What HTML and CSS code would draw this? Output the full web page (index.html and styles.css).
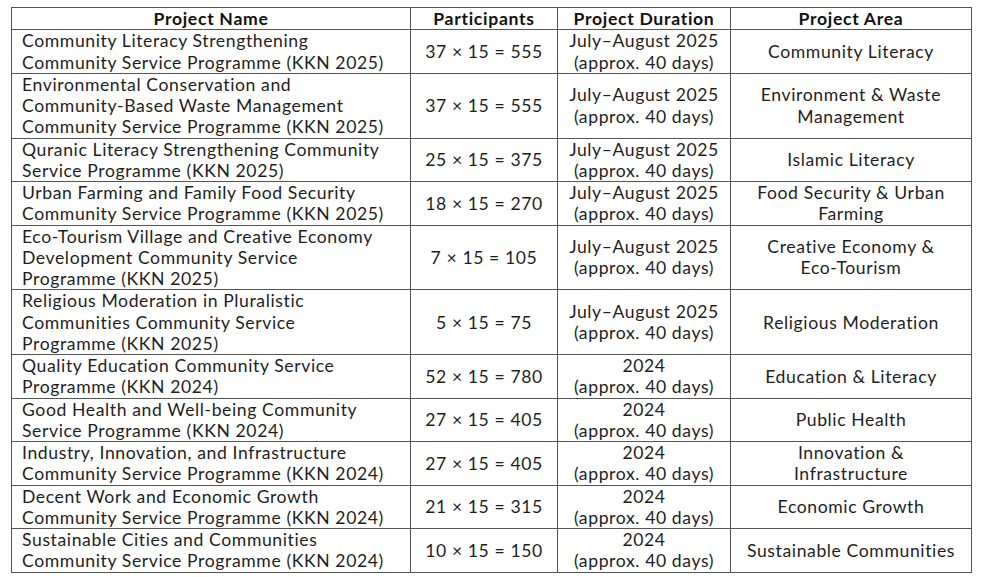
FILE: index.html
```html
<!DOCTYPE html>
<html lang="en">
<head>
<meta charset="utf-8">
<title>KKN Projects</title>
<link rel="stylesheet" href="styles.css">
</head>
<body>
<table class="projects">
  <colgroup>
    <col class="c-name">
    <col class="c-part">
    <col class="c-dur">
    <col class="c-area">
  </colgroup>
  <thead>
    <tr>
      <th>Project Name</th>
      <th>Participants</th>
      <th>Project Duration</th>
      <th>Project Area</th>
    </tr>
  </thead>
  <tbody>
    <tr>
      <td class="name">Community Literacy Strengthening<br>Community Service Programme (KKN 2025)</td>
      <td>37 × 15 = 555</td>
      <td>July–August 2025<br>(approx. 40 days)</td>
      <td>Community Literacy</td>
    </tr>
    <tr>
      <td class="name">Environmental Conservation and<br>Community-Based Waste Management<br>Community Service Programme (KKN 2025)</td>
      <td>37 × 15 = 555</td>
      <td>July–August 2025<br>(approx. 40 days)</td>
      <td>Environment &amp; Waste<br>Management</td>
    </tr>
    <tr>
      <td class="name">Quranic Literacy Strengthening Community<br>Service Programme (KKN 2025)</td>
      <td>25 × 15 = 375</td>
      <td>July–August 2025<br>(approx. 40 days)</td>
      <td>Islamic Literacy</td>
    </tr>
    <tr>
      <td class="name">Urban Farming and Family Food Security<br>Community Service Programme (KKN 2025)</td>
      <td>18 × 15 = 270</td>
      <td>July–August 2025<br>(approx. 40 days)</td>
      <td>Food Security &amp; Urban<br>Farming</td>
    </tr>
    <tr>
      <td class="name">Eco-Tourism Village and Creative Economy<br>Development Community Service<br>Programme (KKN 2025)</td>
      <td>7 × 15 = 105</td>
      <td>July–August 2025<br>(approx. 40 days)</td>
      <td>Creative Economy &amp;<br>Eco-Tourism</td>
    </tr>
    <tr>
      <td class="name">Religious Moderation in Pluralistic<br>Communities Community Service<br>Programme (KKN 2025)</td>
      <td>5 × 15 = 75</td>
      <td>July–August 2025<br>(approx. 40 days)</td>
      <td>Religious Moderation</td>
    </tr>
    <tr>
      <td class="name">Quality Education Community Service<br>Programme (KKN 2024)</td>
      <td>52 × 15 = 780</td>
      <td>2024<br>(approx. 40 days)</td>
      <td>Education &amp; Literacy</td>
    </tr>
    <tr>
      <td class="name">Good Health and Well-being Community<br>Service Programme (KKN 2024)</td>
      <td>27 × 15 = 405</td>
      <td>2024<br>(approx. 40 days)</td>
      <td>Public Health</td>
    </tr>
    <tr>
      <td class="name">Industry, Innovation, and Infrastructure<br>Community Service Programme (KKN 2024)</td>
      <td>27 × 15 = 405</td>
      <td>2024<br>(approx. 40 days)</td>
      <td>Innovation &amp;<br>Infrastructure</td>
    </tr>
    <tr>
      <td class="name">Decent Work and Economic Growth<br>Community Service Programme (KKN 2024)</td>
      <td>21 × 15 = 315</td>
      <td>2024<br>(approx. 40 days)</td>
      <td>Economic Growth</td>
    </tr>
    <tr>
      <td class="name">Sustainable Cities and Communities<br>Community Service Programme (KKN 2024)</td>
      <td>10 × 15 = 150</td>
      <td>2024<br>(approx. 40 days)</td>
      <td>Sustainable Communities</td>
    </tr>
  </tbody>
</table>
</body>
</html>
```

FILE: styles.css
```css
html, body {
  background: #ffffff;
}
body {
  margin: 7px 8px 8px 11px;
  font-family: Lato, "Open Sans", sans-serif;
  color: #1e1e1e;
}
.projects {
  border-collapse: collapse;
  table-layout: fixed;
  width: 960px;
  font-size: 17.6px;
  letter-spacing: 0.6px;
}
.c-name { width: 399px; }
.c-part { width: 147px; }
.c-dur { width: 173px; }
.c-area { width: 241px; }
.projects th,
.projects td {
  border: 1.5px solid #555555;
  line-height: 21.25px;
  padding: 0 6px;
  text-align: center;
  vertical-align: middle;
  white-space: nowrap;
}
.projects th {
  font-weight: 700;
  letter-spacing: 0.7px;
  color: #111111;
}
.projects td.name {
  text-align: left;
  padding-left: 10px;
}
```
